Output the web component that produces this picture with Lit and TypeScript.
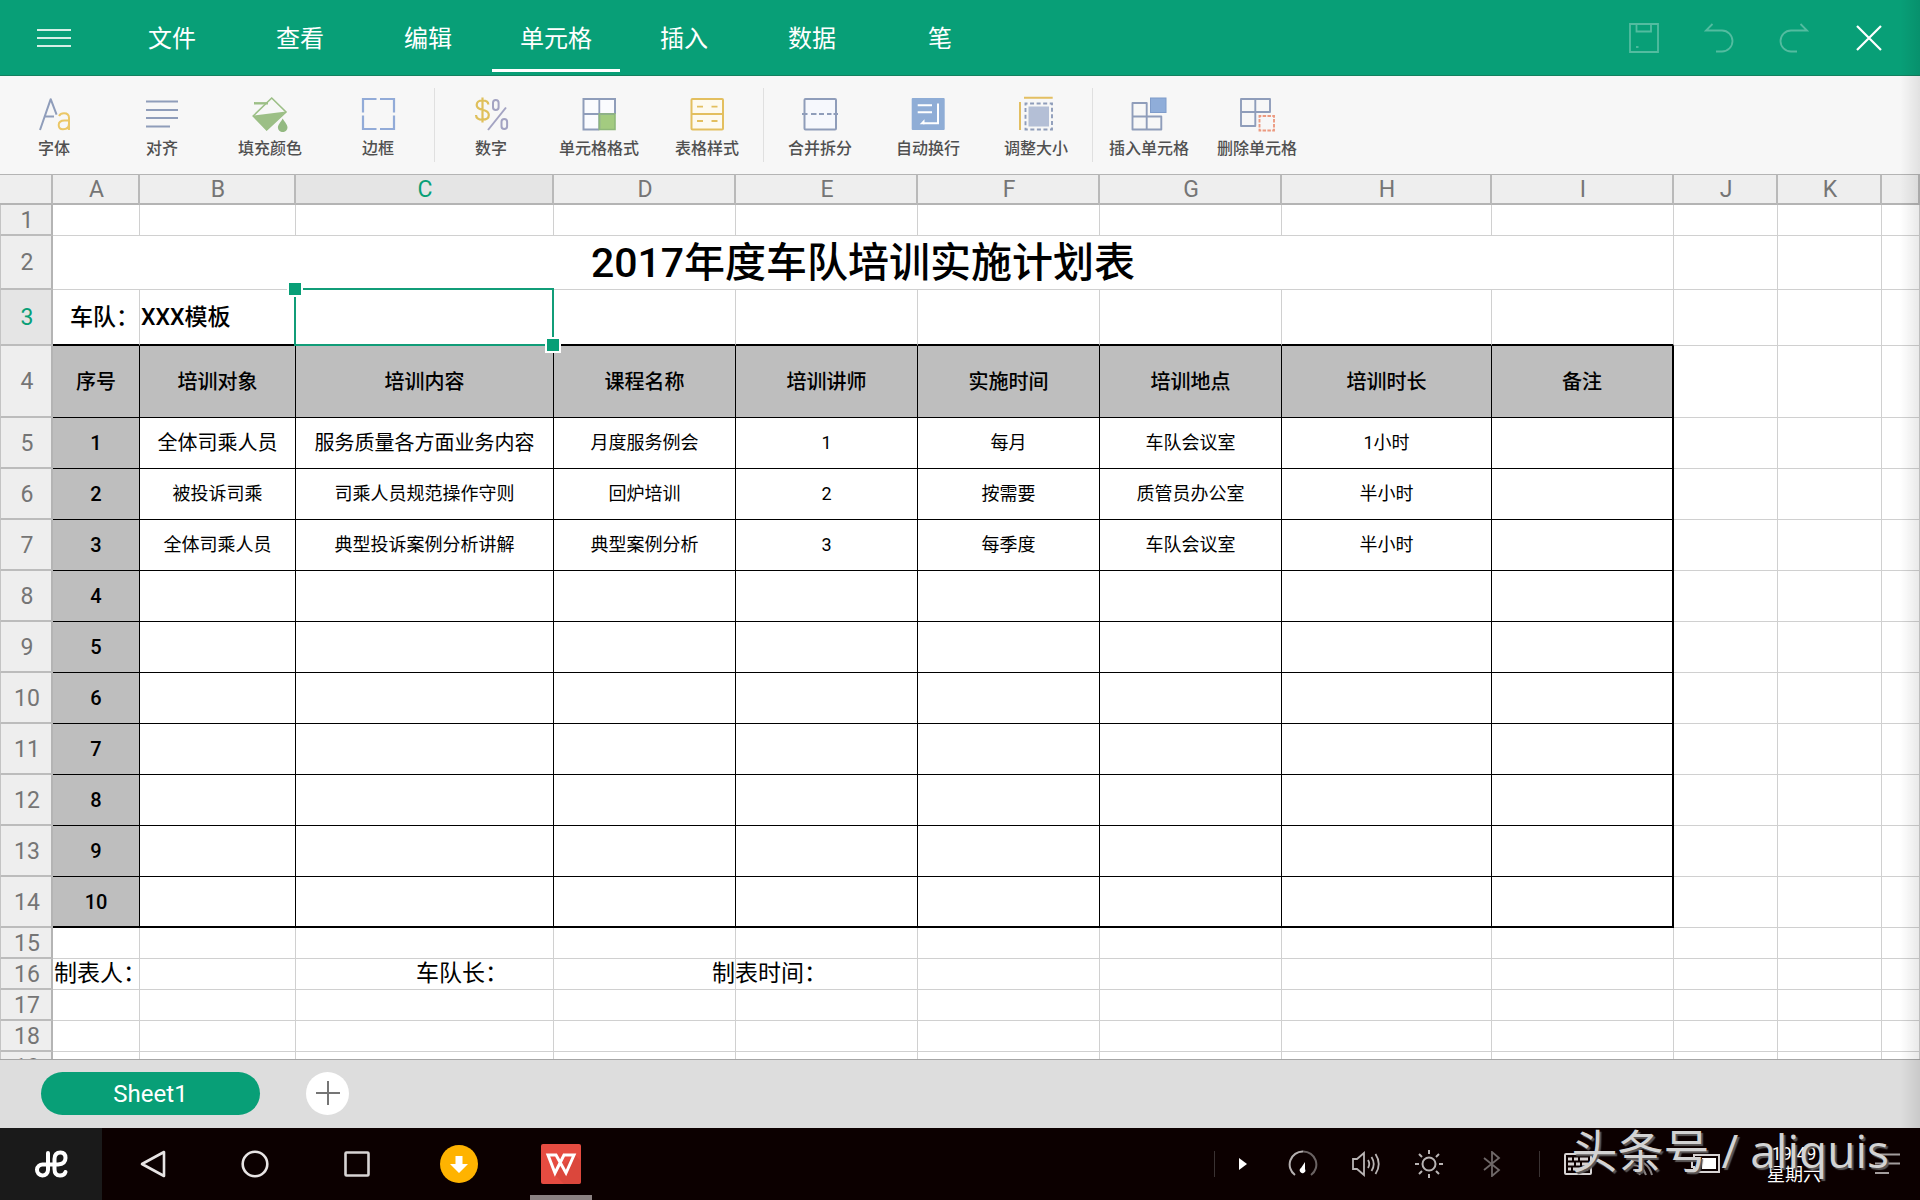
import { LitElement, html, svg, css, nothing } from "lit";
import { customElement, state } from "lit/decorators.js";
import { classMap } from "lit/directives/class-map.js";

const MENUS = ["文件", "查看", "编辑", "单元格", "插入", "数据", "笔"];

const BLUE = "#8f9dba";
const GOLD = "#e3bf5f";

const ICONS: Record<string, unknown> = {
  font: svg`
    <path d="M4 34 14.7 3.2 20.6 18.6M9 20.4H18" fill="none" stroke=${BLUE} stroke-width="2" stroke-linejoin="round"/>
    <path d="M23 20Q24.500 17.300 28 17.300Q33 17.300 33 22V34M33 24.500H28.500Q22.700 24.500 22.700 29Q22.700 33.300 27 33.300Q33 33.300 33 27.500" fill="none" stroke="#ebc766" stroke-width="2"/>`,
  align: svg`<path d="M2 5.500H34M2 14H34M2 22H34M2 30.500H26" stroke=${BLUE} stroke-width="2" fill="none"/>`,
  fill: svg`
    <path d="M19.700 2 34 16 14.700 34 1.200 20Z" fill="none" stroke="#9cbf86" stroke-width="1.600"/>
    <path d="M1 19.700 34 15.500 14.700 34.500Z" fill="#9cbf86"/>
    <path d="M2 7.300H16" stroke="#9cbf86" stroke-width="2.400"/>
    <path d="M30.700 22.500C33 26.500 35.500 28.500 35.500 31.500A4.800 4.600 0 0 1 25.900 31.500C25.900 28.500 28.500 26.500 30.700 22.500Z" fill="#93b981"/>`,
  border: svg`<path d="M16.500 3H3V16.500M20 3H34V16.500M3 19.500V33H16.500M34 19.500V33H20" fill="none" stroke="#92abd8" stroke-width="2.200"/>`,
  number: svg`
    <path d="M15.300 8.500Q15.300 4.500 9.500 4.500Q3.700 4.500 3.700 9Q3.700 12.500 9.500 13.800Q15.800 15.200 15.800 19Q15.800 23.700 9.500 23.700Q3.200 23.700 3 19M9.500 1.500V26.500" fill="none" stroke="#dfc05c" stroke-width="2.200"/>
    <path d="M33 11.500 15 34" stroke="#a3a3c2" stroke-width="2"/>
    <rect x="20" y="4" width="5.600" height="10" rx="2.800" fill="none" stroke="#a3a3c2" stroke-width="2"/>
    <rect x="28.500" y="23" width="5.600" height="10" rx="2.800" fill="none" stroke="#a3a3c2" stroke-width="2"/>`,
  format: svg`
    <rect x="2.500" y="3" width="31.500" height="30.500" fill="#fafbfe"/>
    <rect x="18" y="18" width="16" height="15.500" fill="#a3cb80"/>
    <path d="M18.300 3V33.500M2.500 18H34" stroke=${BLUE} stroke-width="1.800"/>
    <path d="M34 18V3H2.500V33.500H18.300" fill="none" stroke=${BLUE} stroke-width="2"/>
    <path d="M18.300 18V33.500H34V18Z" fill="none" stroke="#8fb87a" stroke-width="1.600"/>`,
  style: svg`
    <rect x="2.500" y="3" width="31.500" height="30.500" rx="1" fill="#fdfaf0" stroke=${GOLD} stroke-width="2"/>
    <path d="M2.500 18H34M8 10.700H14M22.500 10.700H28.500M8 25H14M22.500 25H28.500" stroke=${GOLD} stroke-width="1.800"/>`,
  merge: svg`
    <rect x="2.500" y="3" width="31.500" height="30.500" rx="1" fill="#f6f8fd" stroke=${BLUE} stroke-width="2"/>
    <path d="M0 18H5.500M9 18H14.500M17 18H22M25 18H29.500M31.500 18H36" stroke=${BLUE} stroke-width="1.800"/>`,
  wrap: svg`
    <rect x="1.700" y="2" width="33" height="32" rx="1" fill="#8fadd6"/>
    <path d="M7.700 9.300H22M7.700 16.300H22M28 7.500V27.300H13" fill="none" stroke="#fff" stroke-width="2"/>
    <path d="M9.700 28.300 14.500 23.300V28.300Z" fill="#fff"/>`,
  size: svg`
    <path d="M6 1.800H34.700M2 6V34" stroke="#e3bf62" stroke-width="2"/>
    <rect x="7.500" y="7.500" width="26.500" height="26" fill="none" stroke=${BLUE} stroke-width="1.900" stroke-dasharray="4 2.560" stroke-dashoffset="2"/>
    <rect x="10.500" y="10.500" width="20.500" height="20" fill="#b4bfd6"/>`,
  insert: svg`
    <path d="M1.500 7H15.700V20.500H30.300V33.500H1.500ZM1.500 20.500H15.700V33.500" fill="none" stroke=${BLUE} stroke-width="1.900" stroke-linejoin="round"/>
    <rect x="19.500" y="2" width="15.500" height="14.500" fill="#8fadd9" stroke="#7f9cca" stroke-width="1"/>`,
  remove: svg`
    <path d="M2 3H31V16H16.300V30H2ZM16.300 3V16H2" fill="none" stroke=${BLUE} stroke-width="1.900" stroke-linejoin="round"/>
    <rect x="20.500" y="20" width="14.500" height="14.500" fill="none" stroke="#ec9a80" stroke-width="1.900" stroke-dasharray="3.500 1.330" stroke-dashoffset="1.700"/>`,
};

const TOOL_GROUPS: [string, string][][] = [
  [["font", "字体"], ["align", "对齐"], ["fill", "填充颜色"], ["border", "边框"]],
  [["number", "数字"], ["format", "单元格格式"], ["style", "表格样式"]],
  [["merge", "合并拆分"], ["wrap", "自动换行"], ["size", "调整大小"]],
  [["insert", "插入单元格"], ["remove", "删除单元格"]],
];

const COLUMNS = ["A", "B", "C", "D", "E", "F", "G", "H", "I", "J", "K", ""];
const HEADINGS = ["序号", "培训对象", "培训内容", "课程名称", "培训讲师", "实施时间", "培训地点", "培训时长", "备注"];
const PLAN: string[][] = [
  ["全体司乘人员", "服务质量各方面业务内容", "月度服务例会", "1", "每月", "车队会议室", "1小时", ""],
  ["被投诉司乘", "司乘人员规范操作守则", "回炉培训", "2", "按需要", "质管员办公室", "半小时", ""],
  ["全体司乘人员", "典型投诉案例分析讲解", "典型案例分析", "3", "每季度", "车队会议室", "半小时", ""],
];

@customElement("sheet-grid")
class SheetGrid extends LitElement {
  static styles = css`
    :host { display: block; overflow: hidden; background: #fff; }
    table { width: 100%; table-layout: fixed; border-collapse: separate; border-spacing: 0; color: #000; }
    .w-head { width: 53px; }
    .w-A { width: 87px; }
    .w-B { width: 156px; }
    .w-C { width: 258px; }
    .w-D, .w-E, .w-F, .w-G, .w-I { width: 182px; }
    .w-H { width: 210px; }
    .w-J, .w-K { width: 104px; }
    th, td { box-sizing: border-box; padding: 0; font-weight: 400; line-height: 24px; white-space: nowrap; text-align: center; }
    td { border-right: 1px solid #d0d0d0; border-bottom: 1px solid #d0d0d0; font-size: 18px; }
    .col, .row { padding: 2px 0 0 2px; background: #eee; color: #757575; font-size: 23px; }
    .col { height: 31px; border-top: 1px solid #b4b4b4; border-right: 2px solid #b9b9b9; border-bottom: 2px solid #b4b4b4; }
    .row { border-right: 2px solid #b4b4b4; border-bottom: 2px solid #bcbcbc; border-left: 1px solid #c4c4c4; }
    .current { background: #e5e5e5; color: #089f77; }
    .short { height: 31px; }
    .title-row { height: 54px; }
    .team-row { height: 56px; }
    .head-row { height: 72px; }
    .plan-row { height: 51px; }
    .title { font-size: 41px; font-weight: 500; line-height: 48px; }
    .team { padding-top: 2px; font-size: 23px; font-weight: 500; }
    .end { text-align: right; }
    .start { padding-left: 1px; text-align: left; }
    .note { padding-left: 1px; font-size: 23px; text-align: left; }
    .in-C { padding-left: 120px; }
    .in-D { padding-left: 158px; }
    .ruled { border-color: #000; }
    .ruled.edge { border-right-width: 2px; }
    .foot { border-bottom-width: 2px; }
    .over-head { border-bottom: 2px solid #000; }
    .shade { background: #bebebe; font-size: 20px; font-weight: 500; }
    .large { font-size: 20px; }
    .picked { position: relative; z-index: 1; }
    .frame { position: absolute; inset: -2px -1px -2px -2px; border: 2px solid #119d78; pointer-events: none; }
    .grip { position: absolute; width: 12px; height: 12px; background: #089f77; border: 2px solid #fff; }
    .grip.first { top: -9px; left: -9px; }
    .grip.last { right: -8px; bottom: -9px; }
  `;

  private rowHead(n: number) {
    return html`<th scope="row" class=${classMap({ row: true, current: n === 3 })}>${n}</th>`;
  }

  private blanks(from: number) {
    return COLUMNS.slice(from).map(() => html`<td></td>`);
  }

  private emptyRow(n: number) {
    return html`<tr class="short">${this.rowHead(n)}${this.blanks(0)}</tr>`;
  }

  private planRow(i: number) {
    const foot = i === 9;
    const cells = PLAN[i] ?? Array(8).fill("");
    return html`<tr class="plan-row">
      ${this.rowHead(i + 5)}
      <td class=${classMap({ ruled: true, shade: true, foot })}>${i + 1}</td>
      ${cells.map((text: string, c: number) => html`<td class=${classMap({ ruled: true, foot, edge: c === 7, large: i === 0 && c < 2 })}>${text}</td>`)}
      ${this.blanks(9)}
    </tr>`;
  }

  render() {
    return html`<table>
      <colgroup>
        <col class="w-head">
        ${COLUMNS.map((c) => html`<col class=${c ? `w-${c}` : "w-rest"}>`)}
      </colgroup>
      <thead>
        <tr>
          <td class="col"></td>
          ${COLUMNS.map((c) => html`<th scope="col" class=${classMap({ col: true, current: c === "C" })}>${c}</th>`)}
        </tr>
      </thead>
      <tbody>
        ${this.emptyRow(1)}
        <tr class="title-row">${this.rowHead(2)}<td class="title" colspan="9">2017年度车队培训实施计划表</td>${this.blanks(9)}</tr>
        <tr class="team-row">
          ${this.rowHead(3)}
          <td class="team end over-head">车队：</td>
          <td class="team start over-head">XXX模板</td>
          <td class="picked over-head"><span class="frame"></span><span class="grip first"></span><span class="grip last"></span></td>
          ${COLUMNS.slice(3, 9).map(() => html`<td class="over-head"></td>`)}
          ${this.blanks(9)}
        </tr>
        <tr class="head-row">
          ${this.rowHead(4)}
          ${HEADINGS.map((h, c) => html`<td class=${classMap({ ruled: true, shade: true, edge: c === 8 })}>${h}</td>`)}
          ${this.blanks(9)}
        </tr>
        ${Array.from({ length: 10 }, (_, i) => this.planRow(i))}
        ${this.emptyRow(15)}
        <tr class="short">
          ${this.rowHead(16)}
          <td class="note">制表人：</td><td></td><td class="note in-C">车队长：</td><td class="note in-D">制表时间：</td>
          ${this.blanks(4)}
        </tr>
        ${[17, 18, 19].map((n) => this.emptyRow(n))}
      </tbody>
    </table>`;
  }
}

@customElement("task-bar")
class TaskBar extends LitElement {
  static styles = css`
    :host { display: flex; box-sizing: border-box; height: 72px; background: #0c0000; color: #fff; }
    button { position: relative; display: flex; align-items: center; justify-content: center; padding: 0; border: 0; background: none; color: inherit; font: inherit; }
    .app { width: 102px; }
    .launcher { background: #1a1a1a; }
    .running { position: absolute; bottom: 0; left: 20px; right: 20px; height: 5px; background: #8b8182; }
    .tray { display: flex; align-items: center; margin-left: auto; }
    .rule { width: 1px; height: 26px; background: #3a3232; }
    .arrow { width: 56px; height: 72px; }
    .status { width: 63px; height: 72px; }
    .divided { margin: 0 6px 0 16px; }
    .system { width: 64px; height: 72px; }
    .clock { display: grid; width: 112px; margin-right: 6px; font-size: 18px; line-height: 21px; text-align: center; }
    svg { display: block; }
  `;

  render() {
    return html`
      <button class="app launcher" aria-label="启动器">
        <svg width="34" height="30" viewBox="0 0 34 30" fill="none" stroke="#fff" stroke-width="4" stroke-linecap="round" stroke-linejoin="round">
          <path d="M14 4V21A5.500 5.500 0 1 1 9 15.500H24Q31.500 15 31.500 9Q31.500 3.500 26.500 3.500Q20.500 3.500 20.500 10V20Q20.500 26.500 26 26.500Q30.500 26.500 31.500 23"/>
        </svg>
      </button>
      <button class="app" aria-label="返回">
        <svg width="28" height="30" viewBox="0 0 28 30"><path d="M25 3V27L3 15Z" fill="none" stroke="#e8e4e4" stroke-width="2.600" stroke-linejoin="round"/></svg>
      </button>
      <button class="app" aria-label="主页">
        <svg width="28" height="28" viewBox="0 0 28 28"><circle cx="14" cy="14" r="12.300" fill="none" stroke="#e8e4e4" stroke-width="2.600"/></svg>
      </button>
      <button class="app" aria-label="最近任务">
        <svg width="28" height="28" viewBox="0 0 28 28"><rect x="2.500" y="2.500" width="23" height="23" rx="1" fill="none" stroke="#d8d4d4" stroke-width="2.600"/></svg>
      </button>
      <button class="app" aria-label="下载">
        <svg width="38" height="38" viewBox="0 0 38 38"><circle cx="19" cy="19" r="19" fill="#ffb300"/><path d="M15.500 11H22.500V19H28L19 28 10 19H15.500Z" fill="#fff"/></svg>
      </button>
      <button class="app" aria-label="WPS">
        <svg width="40" height="40" viewBox="0 0 40 40">
          <rect width="40" height="40" rx="2" fill="#e64c41"/>
          <path d="M34 11 40 17V38L38 40H23L13 30Z" fill="#cf4238" opacity=".5"/>
          <path d="M7 11H15L25 29 33 11H23L14 29Z" fill="none" stroke="#fff" stroke-width="3" stroke-linejoin="miter"/>
        </svg>
        <span class="running"></span>
      </button>
      <div class="tray">
        <span class="rule"></span>
        <button class="arrow" aria-label="展开"><svg width="8" height="12" viewBox="0 0 8 12"><path d="M0 0 8 6 0 12Z" fill="#fff"/></svg></button>
        <button class="status" aria-label="性能">
          <svg width="30" height="30" viewBox="0 0 30 30" fill="none" stroke-width="2"><path d="M7 26A13 13 0 0 1 15 2.500" stroke="#b5b0b0"/><path d="M15 2.500A13 13 0 0 1 23 26" stroke="#6b6363"/><path d="M17 13V20A2.800 2.800 0 1 1 13 19Z" fill="#fff"/></svg>
        </button>
        <button class="status" aria-label="音量">
          <svg width="30" height="28" viewBox="0 0 30 28" fill="none" stroke="#b9b4b4" stroke-width="1.800"><path d="M2 9H6L13 3V25L6 19H2ZM17 10Q19.500 14 17 18M20.500 7Q25 14 20.500 21M24.500 4Q31 14 24.500 24"/></svg>
        </button>
        <button class="status" aria-label="亮度">
          <svg width="30" height="30" viewBox="0 0 30 30" fill="none" stroke="#b9b4b4" stroke-width="2"><circle cx="15" cy="15" r="6.500"/><path d="M15 1V5M15 25V29M1 15H5M25 15H29M5 5 8 8M22 22 25 25M25 5 22 8M8 22 5 25"/></svg>
        </button>
        <button class="status" aria-label="蓝牙">
          <svg width="20" height="26" viewBox="0 0 20 26" fill="none" stroke="#6f6868" stroke-width="1.800"><path d="M2 7 17 19 10 25V1L17 7 2 19"/></svg>
        </button>
        <span class="rule divided"></span>
        <button class="system" aria-label="键盘">
          <svg width="28" height="22" viewBox="0 0 28 22" fill="none" stroke="#d8d4d4" stroke-width="2"><rect x="1" y="1" width="26" height="20" rx="1"/><path d="M4 6H8M10 6H14M16 6H24M4 11H10M12 11H16M18 11H24M4 16H7M9 16H19M21 16H24" stroke-width="3"/></svg>
        </button>
        <button class="system" aria-label="网络">
          <svg width="28" height="24" viewBox="0 0 28 24" fill="none" stroke="#8b8585" stroke-width="2"><path d="M3 8Q20 8 24 23M4 13Q15 13 18 23M5 18Q10 18 12 23"/></svg>
        </button>
        <button class="system" aria-label="电池">
          <svg width="30" height="20" viewBox="0 0 30 20"><path d="M3 1H28V18H3V13H1V6H3Z" fill="none" stroke="#d8d4d4" stroke-width="2"/><rect x="11" y="4" width="14" height="11" fill="#fff"/></svg>
        </button>
        <time class="clock"><span>19:49</span><span>星期六</span></time>
        <button class="system" aria-label="通知">
          <svg width="26" height="22" viewBox="0 0 26 22"><path d="M0 1.500H25M0 10.500H25M0 20H14" stroke="#a39d9d" stroke-width="2"/></svg>
        </button>
      </div>`;
  }
}

@customElement("app-root")
class AppRoot extends LitElement {
  static styles = css`
    :host { position: relative; display: flex; flex-direction: column; height: 100vh; overflow: hidden; font-family: Roboto, "Noto Sans CJK SC", sans-serif; background: #f7f7f7; }
    button { display: flex; align-items: center; justify-content: center; padding: 0; border: 0; background: none; color: inherit; font: inherit; }
    .menu-bar { display: flex; box-sizing: border-box; height: 76px; padding-right: 14px; border-bottom: 1px solid #14805f; background: #089f77; color: #fff; }
    .drawer { width: 108px; }
    .menus { display: flex; flex: 1; }
    .menu { box-sizing: border-box; width: 128px; height: 72px; padding-top: 8px; border-bottom: 3px solid transparent; font-size: 24px; line-height: 36px; }
    .menu.active { border-color: #fff; }
    .action { width: 75px; }
    .dim { opacity: .3; }
    .tools { display: flex; height: 98px; flex: none; }
    .group { display: flex; }
    .group + .group::before { content: ""; width: 1px; height: 74px; margin: 12px 2px 0; background: #e0e0e0; }
    .tool { flex-direction: column; justify-content: flex-start; width: 108px; padding-top: 20px; color: #505050; font-size: 16px; font-weight: 500; line-height: 24px; gap: 5px; }
    .grid { flex: 1; min-height: 0; }
    .sheets { display: flex; align-items: center; flex: none; box-sizing: border-box; height: 69px; padding: 0 41px 2px; gap: 46px; border-top: 1px solid #a6a6a6; background: #ddd; }
    .sheet { width: 219px; height: 43px; padding-top: 2px; border-radius: 22px; background: #089f77; color: #fff; font-size: 24px; }
    .add { width: 43px; height: 43px; border-radius: 50%; background: #fff; }
    .taskbar { flex: none; }
    .edge-shade { position: absolute; top: 0; right: 0; bottom: 72px; width: 20px; background: linear-gradient(to right, transparent, rgba(0, 0, 0, .09)); pointer-events: none; }
    .signature { position: absolute; right: 31px; bottom: 20px; color: #d3d3d3; font-family: "Open Sans", "Noto Sans CJK SC", sans-serif; font-size: 46px; line-height: 60px; white-space: nowrap; text-shadow: 2px 2px 1px #5c5858; pointer-events: none; }
    svg { display: block; }
  `;

  @state() private active = "单元格";

  render() {
    return html`
      <header class="menu-bar">
        <button class="drawer" aria-label="菜单"><svg width="34" height="20" viewBox="0 0 34 20"><path d="M0 2H34M0 10H34M0 18H34" stroke="#d5efe6" stroke-width="2"/></svg></button>
        <nav class="menus">
          ${MENUS.map((m) => html`<button class=${classMap({ menu: true, active: m === this.active })} aria-current=${m === this.active ? "true" : nothing} @click=${() => (this.active = m)}>${m}</button>`)}
        </nav>
        <button class="action dim" aria-label="保存"><svg width="30" height="30" viewBox="0 0 30 30" fill="none" stroke="#fff" stroke-width="1.800"><path d="M1 1H29V29H1ZM7.500 1V8.500H22V1"/><path d="M7 24H9.500"/></svg></button>
        <button class="action dim" aria-label="撤销"><svg width="30" height="30" viewBox="0 0 30 30" fill="none" stroke="#fff" stroke-width="1.800"><path d="M8.500 1 2 7.500H18A10.500 10.500 0 0 1 18 28.500H12"/></svg></button>
        <button class="action dim" aria-label="重做"><svg width="30" height="30" viewBox="0 0 30 30" fill="none" stroke="#fff" stroke-width="1.800"><path d="M21.500 1 28 7.500H12A10.500 10.500 0 0 0 12 28.500H18"/></svg></button>
        <button class="action" aria-label="关闭"><svg width="26" height="26" viewBox="0 0 26 26"><path d="M1 1 25 25M25 1 1 25" stroke="#fff" stroke-width="2.200"/></svg></button>
      </header>
      <div class="tools" role="toolbar">
        ${TOOL_GROUPS.map((group) => html`<div class="group">
          ${group.map(([icon, label]) => html`<button class="tool"><svg width="36" height="36" viewBox="0 0 36 36">${ICONS[icon]}</svg>${label}</button>`)}
        </div>`)}
      </div>
      <sheet-grid class="grid"></sheet-grid>
      <div class="sheets">
        <button class="sheet">Sheet1</button>
        <button class="add" aria-label="新建工作表"><svg width="26" height="26" viewBox="0 0 26 26"><path d="M1 13H25M13 1V25" stroke="#757575" stroke-width="2"/></svg></button>
      </div>
      <task-bar class="taskbar"></task-bar>
      <div class="edge-shade"></div>
      <div class="signature">头条号 / aliquis</div>`;
  }
}
